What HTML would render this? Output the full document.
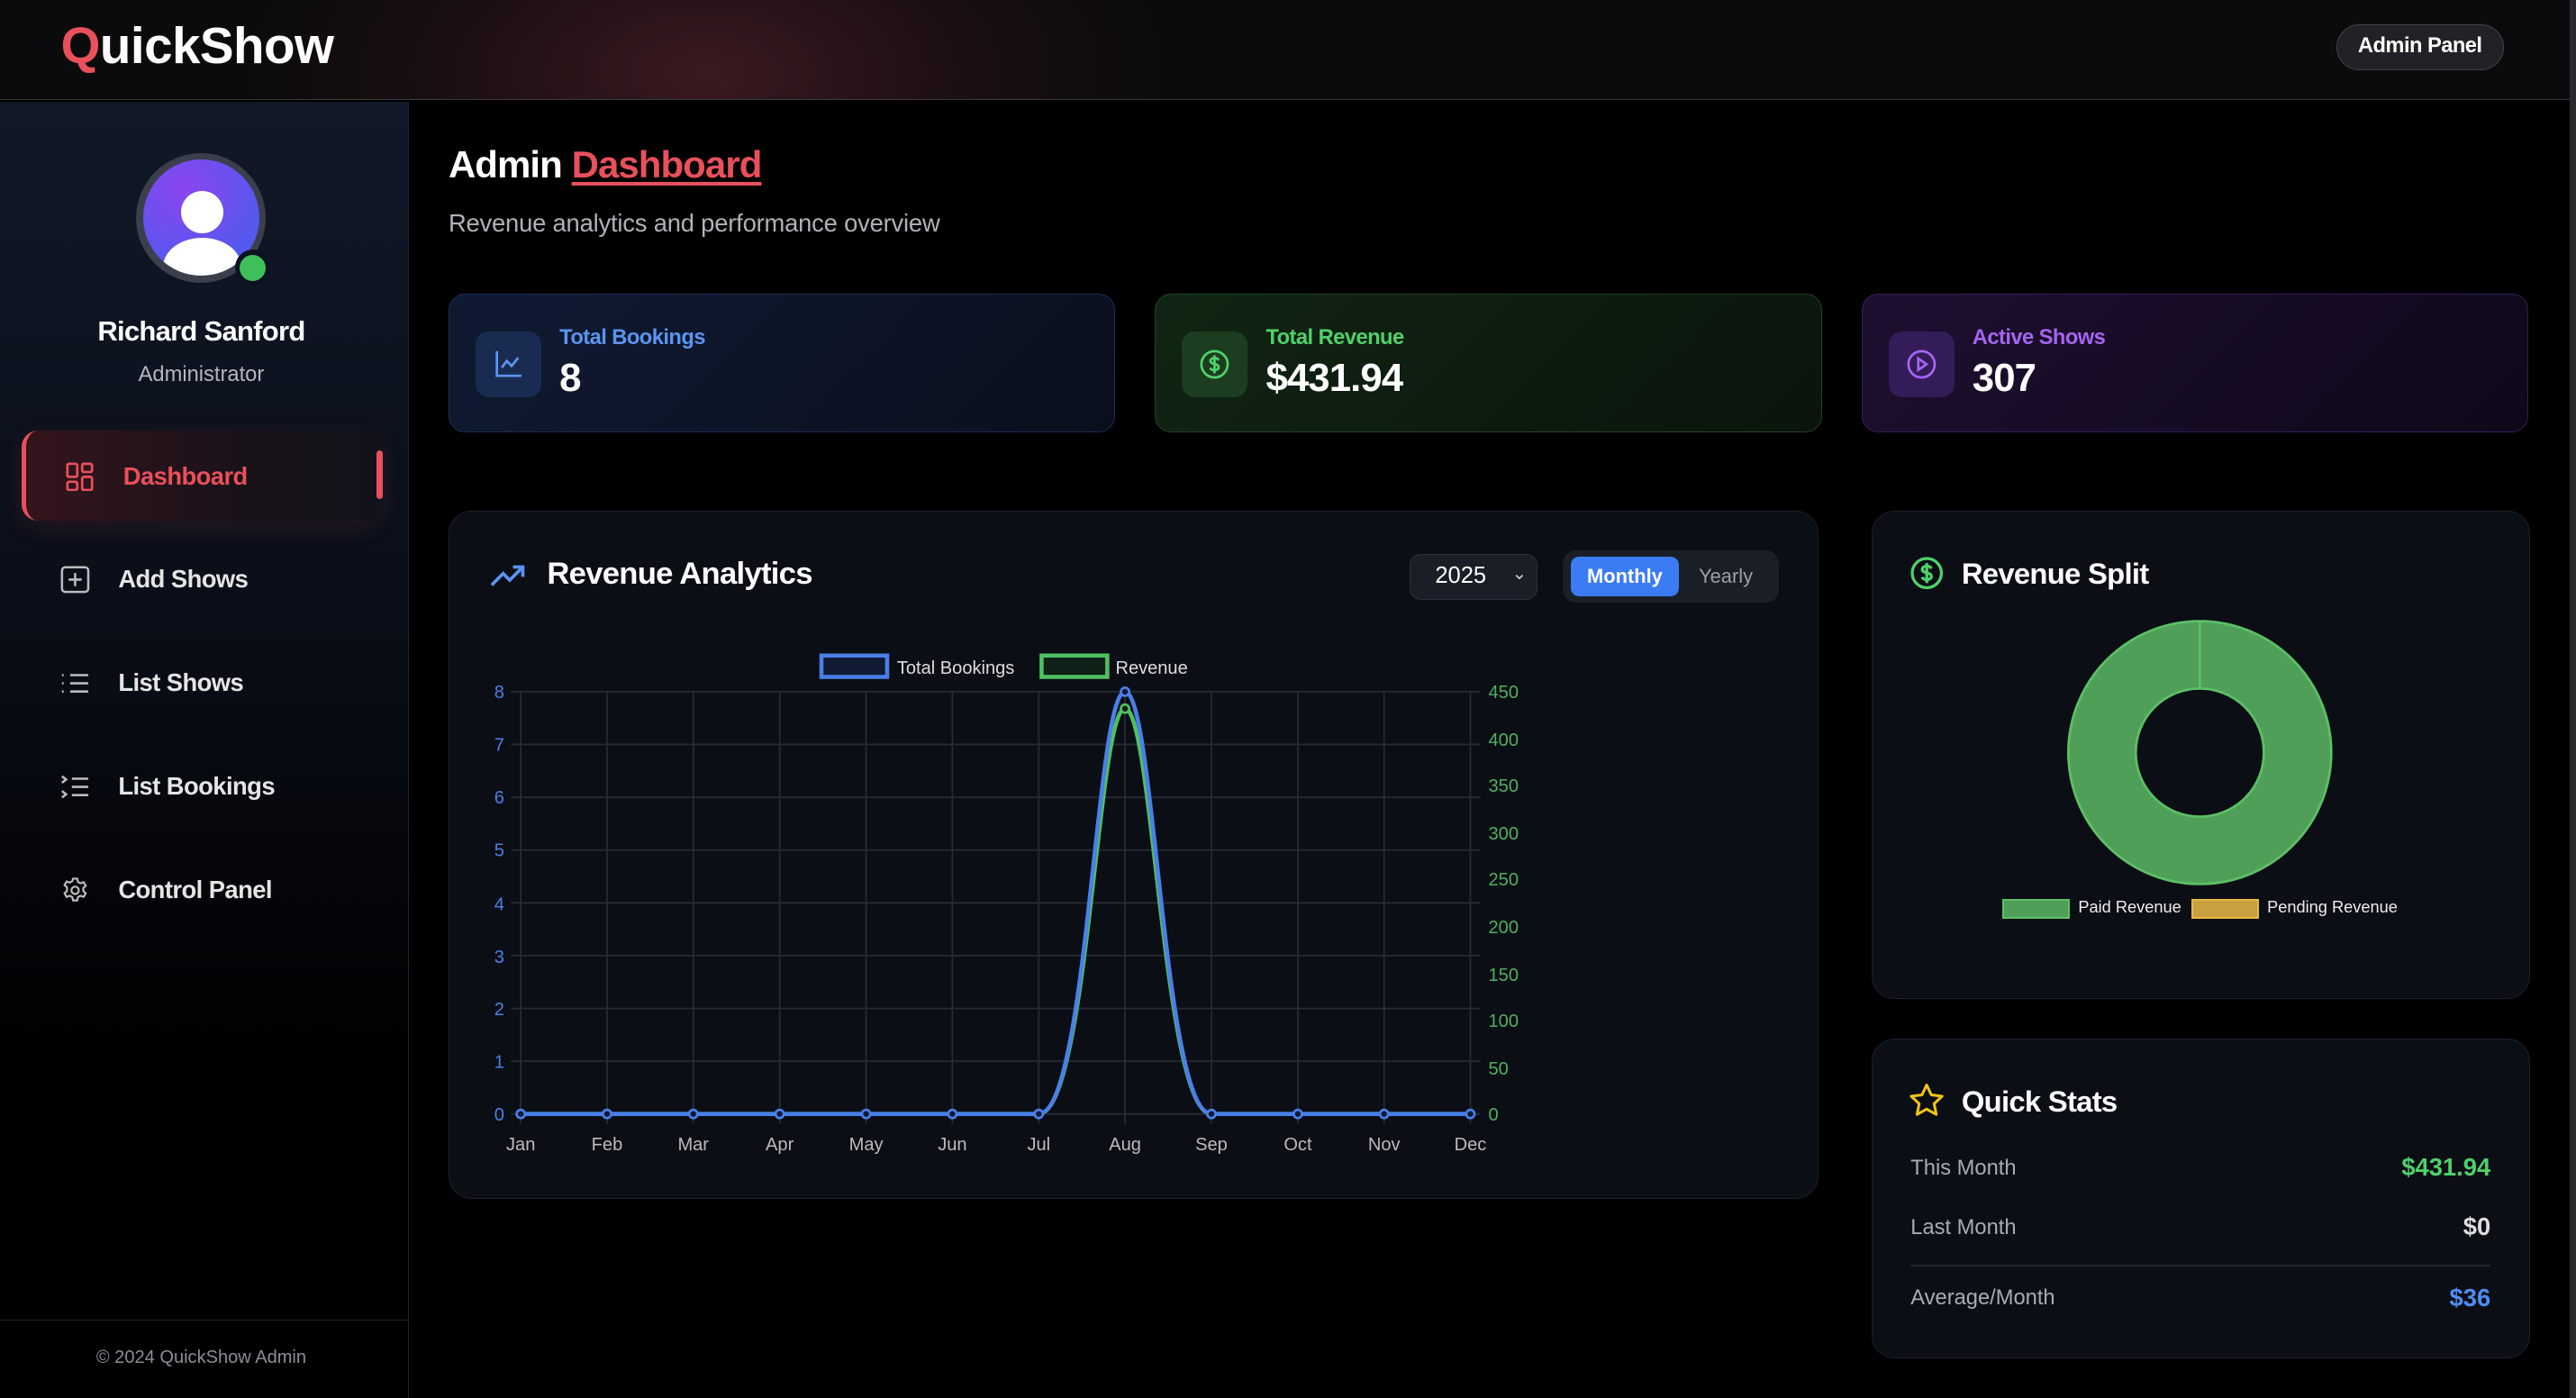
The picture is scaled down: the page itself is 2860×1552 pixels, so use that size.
<!DOCTYPE html>
<html><head><meta charset="utf-8"><style>
*{box-sizing:border-box;margin:0;padding:0}
html,body{width:2860px;height:1552px;overflow:hidden;background:#000}
#root{zoom:1.82398;width:1568px;height:851px;position:relative;font-family:"Liberation Sans",sans-serif;color:#fff;background:#000;overflow:hidden}
.abs{position:absolute}
.hdr{left:0;top:0;width:1568px;height:61px;background:radial-gradient(ellipse 280px 150px at 430px 45px,#3a1a20 0%,#1c0f12 55%,#0b0b0d 100%);border-bottom:1px solid #3a3a3e}
.logo{left:37px;top:10px;font-size:31px;font-weight:bold;letter-spacing:-0.3px}
.btn{left:1422px;top:15px;width:102px;height:28px;border-radius:14px;background:#222226;border:1px solid #444;font-size:13px;font-weight:bold;text-align:center;line-height:26px;letter-spacing:-0.3px}
.side{left:0;top:62px;width:249px;height:789px;background:linear-gradient(180deg,#111828 0%,#0a0e18 40%,#000 75%);border-right:1px solid #1f2433}
.nav{left:72px;font-size:15px;font-weight:bold;color:#e5e5e5;letter-spacing:-0.3px}
.card{top:179px;width:406px;height:84px;border-radius:10px}
.ib{left:16px;top:22px;width:40px;height:40px;border-radius:8px}
.lab{left:67px;top:19px;font-size:13px;font-weight:bold;letter-spacing:-0.3px}
.val{left:67px;top:37px;font-size:24px;font-weight:bold;letter-spacing:-0.5px}
.panel{background:#0b0e15;border:1px solid #1b202c;border-radius:14px}
.ax{font-size:11px;font-family:"Liberation Sans",sans-serif}
</style></head><body><div id="root">
<div class="abs hdr"></div>
<div class="abs logo"><span style="color:#e8505b">Q</span>uickShow</div>
<div class="abs btn">Admin Panel</div>
<div class="abs" style="left:1564px;top:0;width:4px;height:851px;background:#2a2a2e"></div>

<div class="abs side"></div>
<div class="abs" style="left:83px;top:93px;width:79px;height:79px;border-radius:50%;background:#3b3f4c"></div>
<div class="abs" style="left:87px;top:97px;width:71px;height:71px;border-radius:50%;background:radial-gradient(circle at 35% 25%,#8b45f0,#5558ee 70%);overflow:hidden">
 <div class="abs" style="left:23px;top:19px;width:26px;height:26px;border-radius:50%;background:#fff"></div>
 <div class="abs" style="left:12px;top:48px;width:48px;height:36px;border-radius:50%;background:#fff"></div>
</div>
<div class="abs" style="left:143px;top:152px;width:22px;height:22px;border-radius:50%;background:#0d1220"></div>
<div class="abs" style="left:146px;top:155px;width:16px;height:16px;border-radius:50%;background:#3fbf5a"></div>
<div class="abs" style="left:0;width:245px;top:192px;text-align:center;font-size:17px;font-weight:bold;letter-spacing:-0.4px">Richard Sanford</div>
<div class="abs" style="left:0;width:245px;top:221px;text-align:center;font-size:13px;color:#b5b7bd">Administrator</div>

<div class="abs" style="left:13px;top:262px;width:220px;height:55px;border-radius:10px;background:linear-gradient(90deg,#34141d,#1a1219 60%,#12121a);border-left:3px solid #e8505b;box-shadow:0 4px 14px rgba(232,80,91,0.12)"></div>
<div class="abs" style="left:229px;top:274px;width:4px;height:30px;border-radius:2px;background:#e8505b"></div>
<svg class="abs" style="left:40px;top:281px" width="18" height="18" viewBox="0 0 18 18" fill="none" stroke="#e8505b" stroke-width="1.5"><rect x="1" y="1" width="6" height="8" rx="1"/><rect x="10" y="1" width="6" height="5" rx="1"/><rect x="10" y="9" width="6" height="8" rx="1"/><rect x="1" y="12" width="6" height="5" rx="1"/></svg>
<div class="abs nav" style="left:75px;top:281px;color:#e8505b">Dashboard</div>

<svg class="abs" style="left:37px;top:344px" width="18" height="18" viewBox="0 0 18 18" fill="none" stroke="#bbb" stroke-width="1.4"><rect x="1" y="1.5" width="16" height="15" rx="2"/><path d="M9 5v8M5 9h8"/></svg>
<div class="abs nav" style="top:344px">Add Shows</div>
<svg class="abs" style="left:37px;top:408px" width="18" height="16" viewBox="0 0 18 16" fill="none" stroke="#bbb" stroke-width="1.4"><path d="M6 3h11M6 8h11M6 13h11M1 3h1M1 8h1M1 13h1"/></svg>
<div class="abs nav" style="top:407px">List Shows</div>
<svg class="abs" style="left:37px;top:471px" width="18" height="16" viewBox="0 0 18 16" fill="none" stroke="#bbb" stroke-width="1.4"><path d="M7 3h10M7 8h10M7 13h10M1 1.5l2.5 2-2.5 2M1 10.5l2.5 2-2.5 2"/></svg>
<div class="abs nav" style="top:470px">List Bookings</div>
<svg class="abs" style="left:37px;top:533px" width="18" height="18" viewBox="0 0 24 24" fill="none" stroke="#bbb" stroke-width="1.6"><circle cx="12" cy="12" r="3"/><path d="M10.3 2.5h3.4l.6 2.7 2 1.1 2.6-.9 1.7 2.9-2 1.9v2.3l2 1.9-1.7 2.9-2.6-.9-2 1.1-.6 2.7h-3.4l-.6-2.7-2-1.1-2.6.9-1.7-2.9 2-1.9V9.6l-2-1.9 1.7-2.9 2.6.9 2-1.1z"/></svg>
<div class="abs nav" style="top:533px">Control Panel</div>
<div class="abs" style="left:0;top:803px;width:249px;height:1px;background:#1c2230"></div>
<div class="abs" style="left:0;width:245px;top:820px;text-align:center;font-size:11px;color:#8a8e98">© 2024 QuickShow Admin</div>

<div class="abs" style="left:273px;top:87px;font-size:23px;font-weight:bold;letter-spacing:-0.5px">Admin <span style="color:#e8505b;text-decoration:underline;text-underline-offset:3px">Dashboard</span></div>
<div class="abs" style="left:273px;top:127px;font-size:15px;color:#b0b2b8;letter-spacing:-0.1px">Revenue analytics and performance overview</div>

<div class="abs card" style="left:273px;background:linear-gradient(135deg,#0f1a33,#0a0f1c);border:1px solid #1c2d55">
 <div class="abs ib" style="background:#1a2b52"></div>
 <svg class="abs" style="left:27px;top:33px" width="18" height="18" viewBox="0 0 18 18" fill="none" stroke="#5b94f0" stroke-width="1.5"><path d="M2 1v15h15M5 11l3-4 3 3 4-5"/></svg>
 <div class="abs lab" style="color:#5b94f0">Total Bookings</div><div class="abs val">8</div></div>
<div class="abs card" style="left:703px;background:linear-gradient(135deg,#112513,#0a140c);border:1px solid #1f4425">
 <div class="abs ib" style="background:#1c3d20"></div>
 <svg class="abs" style="left:27px;top:33px" width="18" height="18" viewBox="0 0 18 18" fill="none" stroke="#4fd06a" stroke-width="1.5"><circle cx="9" cy="9" r="8"/><path d="M11.5 6.5c-.5-1-1.5-1.3-2.5-1.3-1.5 0-2.5.8-2.5 1.8 0 2.4 5 1.2 5 3.8 0 1-1 1.8-2.5 1.8-1.2 0-2.2-.5-2.6-1.4M9 3.5v11"/></svg>
 <div class="abs lab" style="color:#4fd06a">Total Revenue</div><div class="abs val">$431.94</div></div>
<div class="abs card" style="left:1133px;background:linear-gradient(135deg,#1e0f30,#10081a);border:1px solid #33205a">
 <div class="abs ib" style="background:#341c58"></div>
 <svg class="abs" style="left:27px;top:33px" width="18" height="18" viewBox="0 0 18 18" fill="none" stroke="#a564f0" stroke-width="1.5"><circle cx="9" cy="9" r="8"/><path d="M7 5.5v7l5-3.5z"/></svg>
 <div class="abs lab" style="color:#a564f0">Active Shows</div><div class="abs val">307</div></div>

<div class="abs panel" style="left:273px;top:311px;width:834px;height:419px"></div>
<svg class="abs" style="left:298px;top:342px" width="22" height="16" viewBox="0 0 22 16" fill="none" stroke="#5b94f0" stroke-width="2"><path d="M1 14l7-7 4 4 8-8M14 3h6v6"/></svg>
<div class="abs" style="left:333px;top:339px;font-size:19px;font-weight:bold;letter-spacing:-0.4px">Revenue Analytics</div>
<div class="abs" style="left:858px;top:337px;width:78px;height:28px;border-radius:7px;background:#1a1e27;border:1px solid #2c3240;font-size:14px;line-height:26px;padding-left:15px">2025<span style="position:absolute;right:6px;top:-1px;font-size:11px;color:#ccc">&#8964;</span></div>
<div class="abs" style="left:951px;top:335px;width:132px;height:32px;border-radius:8px;background:#1a1e27"></div>
<div class="abs" style="left:956px;top:339px;width:66px;height:24px;border-radius:5px;background:#3b7cf5;font-size:12px;text-align:center;line-height:24px;font-weight:bold">Monthly</div>
<div class="abs" style="left:1022px;top:339px;width:57px;height:24px;font-size:12px;text-align:center;line-height:24px;color:#9aa0aa">Yearly</div>

<svg class="abs" style="left:0;top:0" width="1568" height="851">
 <g stroke="#262a33" stroke-width="1">
  <path d="M317 421V684M369.5 421V684M422 421V684M474.6 421V684M527.2 421V684M579.7 421V684M632.3 421V684M684.8 421V684M737.4 421V684M790 421V684M842.5 421V684M895 421V684"/>
  <path d="M311 421H901M311 453.1H901M311 485.3H901M311 517.4H901M311 549.5H901M311 581.6H901M311 613.8H901M311 645.9H901M311 678H901"/>
 </g>
 <rect x="500" y="399" width="40" height="13" fill="#111a33" stroke="#4a7fe8" stroke-width="2.5"/>
 <text x="546" y="410" fill="#ddd" class="ax" font-size="12">Total Bookings</text>
 <rect x="634" y="399" width="40" height="13" fill="#10211a" stroke="#4fc060" stroke-width="2.5"/>
 <text x="679" y="410" fill="#ddd" class="ax" font-size="12">Revenue</text>
 <g fill="#4a7fe8" class="ax" text-anchor="end">
  <text x="307" y="425">8</text><text x="307" y="457">7</text><text x="307" y="489">6</text><text x="307" y="521">5</text><text x="307" y="554">4</text><text x="307" y="586">3</text><text x="307" y="618">2</text><text x="307" y="650">1</text><text x="307" y="682">0</text>
 </g>
 <g fill="#4fb060" class="ax">
  <text x="906" y="425">450</text><text x="906" y="454">400</text><text x="906" y="482">350</text><text x="906" y="511">300</text><text x="906" y="539">250</text><text x="906" y="568">200</text><text x="906" y="597">150</text><text x="906" y="625">100</text><text x="906" y="654">50</text><text x="906" y="682">0</text>
 </g>
 <g fill="#bbb" class="ax" text-anchor="middle" font-size="12">
  <text x="317" y="700">Jan</text><text x="369.5" y="700">Feb</text><text x="422" y="700">Mar</text><text x="474.6" y="700">Apr</text><text x="527.2" y="700">May</text><text x="579.7" y="700">Jun</text><text x="632.3" y="700">Jul</text><text x="684.8" y="700">Aug</text><text x="737.4" y="700">Sep</text><text x="790" y="700">Oct</text><text x="842.5" y="700">Nov</text><text x="895" y="700">Dec</text>
 </g>
 <path d="M317 678H632.3C662 678 668 431.3 684.8 431.3C702 431.3 708 678 737.4 678H895" fill="none" stroke="#4fc060" stroke-width="2.5"/>
 <path d="M317 678H632.3C662 678 667 421 684.8 421C703 421 708 678 737.4 678H895" fill="none" stroke="#4a7fe8" stroke-width="2.5"/>
 <g fill="#111a33" stroke="#4a7fe8" stroke-width="1.5">
  <circle cx="317" cy="678" r="2.5"/><circle cx="369.5" cy="678" r="2.5"/><circle cx="422" cy="678" r="2.5"/><circle cx="474.6" cy="678" r="2.5"/><circle cx="527.2" cy="678" r="2.5"/><circle cx="579.7" cy="678" r="2.5"/><circle cx="632.3" cy="678" r="2.5"/><circle cx="684.8" cy="421" r="2.5"/><circle cx="737.4" cy="678" r="2.5"/><circle cx="790" cy="678" r="2.5"/><circle cx="842.5" cy="678" r="2.5"/><circle cx="895" cy="678" r="2.5"/>
 </g>
 <circle cx="684.8" cy="431.3" r="2.5" fill="#10211a" stroke="#4fc060" stroke-width="1.5"/>
</svg>

<div class="abs panel" style="left:1139px;top:311px;width:401px;height:297px"></div>
<svg class="abs" style="left:1163px;top:339px" width="20" height="20" viewBox="0 0 18 18" fill="none" stroke="#4fd06a" stroke-width="1.6"><circle cx="9" cy="9" r="8"/><path d="M11.5 6.5c-.5-1-1.5-1.3-2.5-1.3-1.5 0-2.5.8-2.5 1.8 0 2.4 5 1.2 5 3.8 0 1-1 1.8-2.5 1.8-1.2 0-2.2-.5-2.6-1.4M9 3.5v11"/></svg>
<div class="abs" style="left:1194px;top:339px;font-size:18px;font-weight:bold;letter-spacing:-0.4px">Revenue Split</div>
<svg class="abs" style="left:1250px;top:370px" width="180" height="180"><circle cx="89" cy="88" r="59.5" fill="none" stroke="#4f9f58" stroke-width="41"/><circle cx="89" cy="88" r="80" fill="none" stroke="#5cc066" stroke-width="1.5"/><circle cx="89" cy="88" r="39" fill="none" stroke="#5cc066" stroke-width="1.5"/><path d="M89 8V49" stroke="#5cc066" stroke-width="1.5"/></svg>
<div class="abs" style="left:1219px;top:547px;width:41px;height:12px;background:#4f9f58;border:1.5px solid #5cc066"></div>
<div class="abs" style="left:1265px;top:546px;font-size:10px;color:#eee">Paid Revenue</div>
<div class="abs" style="left:1334px;top:547px;width:41px;height:12px;background:#c9a040;border:1.5px solid #e8b840"></div>
<div class="abs" style="left:1380px;top:546px;font-size:10px;color:#eee">Pending Revenue</div>

<div class="abs panel" style="left:1139px;top:632px;width:401px;height:195px"></div>
<svg class="abs" style="left:1162px;top:659px" width="22" height="21" viewBox="0 0 24 23" fill="none" stroke="#f5c518" stroke-width="1.8" stroke-linejoin="round"><path d="M12 1.5l3.1 6.6 7.2.9-5.3 5 1.4 7.1L12 17.6l-6.4 3.5L7 14l-5.3-5 7.2-.9z"/></svg>
<div class="abs" style="left:1194px;top:660px;font-size:18px;font-weight:bold;letter-spacing:-0.4px">Quick Stats</div>
<div class="abs" style="left:1163px;top:704px;font-size:13px;color:#a8abb3">This Month</div>
<div class="abs" style="right:52px;top:702px;font-size:15px;font-weight:bold;color:#4fd06a">$431.94</div>
<div class="abs" style="left:1163px;top:740px;font-size:13px;color:#a8abb3">Last Month</div>
<div class="abs" style="right:52px;top:738px;font-size:15px;font-weight:bold;color:#ddd">$0</div>
<div class="abs" style="left:1163px;top:770px;width:353px;height:1px;background:#22262f"></div>
<div class="abs" style="left:1163px;top:783px;font-size:13px;color:#a8abb3">Average/Month</div>
<div class="abs" style="right:52px;top:781px;font-size:15px;font-weight:bold;color:#4d8df5">$36</div>
</div></body></html>
